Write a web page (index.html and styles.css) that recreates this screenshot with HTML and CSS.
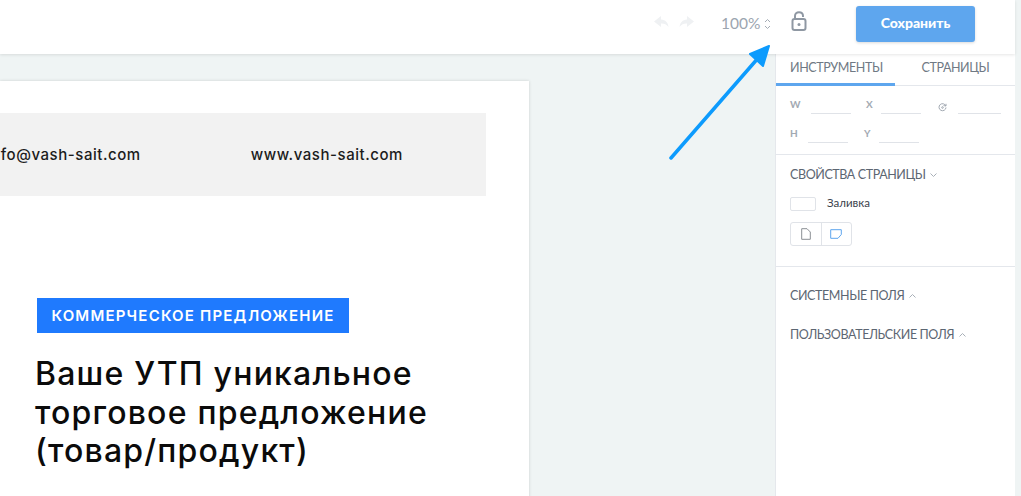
FILE: index.html
```html
<!DOCTYPE html>
<html lang="en">
<head>
    <meta charset="UTF-8">
    <title>Редактор</title>
    <link rel="stylesheet" href="styles.css">
</head>
<body>
    <div class="app">
        <div class="workspace">
            <header class="topbar">
                <svg class="history" width="42" height="14" viewBox="0 0 42 14">
                    <path d="M8 1 L1 6.500 L8 12 V8.500 C11 8.300 13.500 9.300 15.500 12 C15 7.500 12.500 4.800 8 4.500 Z" />
                    <path d="M34 1 L41 6.500 L34 12 V8.500 C31 8.300 28.500 9.300 26.500 12 C27 7.500 29.500 4.800 34 4.500 Z" />
                </svg>
                <span class="zoom-value">100%</span>
                <svg class="zoom-arrows" width="7" height="12" viewBox="0 0 7 12">
                    <path d="M1 4 L3.500 1.500 L6 4 M1 8 L3.500 10.500 L6 8" />
                </svg>
                <svg class="lock" width="16" height="20" viewBox="0 0 16 20">
                    <path class="lock-line" d="M4 8 V5 C4 2.500 5.700 1.200 8 1.200 C10.300 1.200 12 2.500 12 5 V6" />
                    <rect class="lock-line" x="1.500" y="8" width="13" height="11" rx="2" />
                    <circle class="lock-dot" cx="8" cy="13.500" r="1.500" />
                </svg>
                <button class="save-btn">Сохранить</button>
            </header>

            <div class="main">
                <div class="canvas">
                    <div class="page">
                        <div class="contacts">
                            <span>info@vash-sait.com</span>
                            <span>www.vash-sait.com</span>
                        </div>
                        <div class="offer">
                            <div class="offer-badge">КОММЕРЧЕСКОЕ ПРЕДЛОЖЕНИЕ</div>
                            <h1 class="offer-title">Ваше УТП уникальное<br>торговое предложение<br>(товар/продукт)</h1>
                        </div>
                    </div>
                </div>

                <aside class="sidebar">
                    <div class="tabs">
                        <div class="tab tab-active">ИНСТРУМЕНТЫ</div>
                        <div class="tab">СТРАНИЦЫ</div>
                    </div>

                    <div class="fields">
                        <div class="field-row">
                            <span class="field-label label-w">W</span>
                            <span class="field-line"></span>
                            <span class="field-label label-x">X</span>
                            <span class="field-line"></span>
                            <svg class="rotate-icon" width="9" height="9" viewBox="0 0 9 9">
                                <path d="M7.800 3 A3.500 3.500 0 1 0 8 4.500 M5.500 2.600 L8 3 L8 .8" />
                                <circle cx="4.500" cy="4.500" r=".8" />
                            </svg>
                            <span class="field-line line-wide"></span>
                        </div>
                        <div class="field-row">
                            <span class="field-label label-h">H</span>
                            <span class="field-line"></span>
                            <span class="field-label label-y">Y</span>
                            <span class="field-line"></span>
                        </div>
                    </div>

                    <div class="props">
                        <div class="section-title">СВОЙСТВА СТРАНИЦЫ
                            <svg class="chevron" width="7" height="4" viewBox="0 0 7 4"><path d="M.5 .5 L3.500 3.500 L6.500 .5" /></svg>
                        </div>
                        <div class="fill-row">
                            <span class="swatch"></span>
                            <span class="fill-label">Заливка</span>
                        </div>
                        <div class="orient">
                            <span class="orient-btn">
                                <svg width="10" height="12" viewBox="0 0 10 12"><path class="sheet-gray" d="M.7 .7 H6 L9.300 4 V11.300 H.7 Z" /></svg>
                            </span>
                            <span class="orient-btn">
                                <svg width="12" height="10" viewBox="0 0 12 10"><path class="sheet-blue" d="M.7 .7 H11.300 V5.500 L8 9.300 H.7 Z" /></svg>
                            </span>
                        </div>
                    </div>

                    <div class="section-title section-closed">СИСТЕМНЫЕ ПОЛЯ
                        <svg class="chevron" width="7" height="4" viewBox="0 0 7 4"><path d="M.5 3.500 L3.500 .5 L6.500 3.500" /></svg>
                    </div>
                    <div class="section-title section-closed">ПОЛЬЗОВАТЕЛЬСКИЕ ПОЛЯ
                        <svg class="chevron" width="7" height="4" viewBox="0 0 7 4"><path d="M.5 3.500 L3.500 .5 L6.500 3.500" /></svg>
                    </div>
                </aside>
            </div>
        </div>
        <div class="edge"></div>
    </div>

    <!-- annotation arrow over the screenshot -->
    <svg class="arrow" width="110" height="125" viewBox="0 0 110 125">
        <path class="arrow-shaft" d="M2 120 L90 19" />
        <path class="arrow-head" d="M100 8 L81 16 L94 28 Z" />
    </svg>
</body>
</html>
```

FILE: styles.css
```css
body {
    margin: 0;
    width: 1021px;
    height: 496px;
    overflow: hidden;
    position: relative;
    font-family: Lato, "Noto Sans", sans-serif;
    background-color: #eff4f4;
}

.app {
    display: flex;
    height: 496px;
}

.workspace {
    flex: 1;
    display: flex;
    flex-direction: column;
    min-width: 0;
}

.edge {
    width: 6px;
    background-color: #eff4f4;
}

.topbar {
    height: 54px;
    display: flex;
    align-items: center;
    background-color: #ffffff;
    box-shadow: 0 1px 3px rgba(0, 0, 0, 0.1);
    position: relative;
    z-index: 2;
}

.history {
    margin-left: 653px;
    margin-top: -10px;
    fill: #eff1f3;
}

.zoom-value {
    margin-left: 26px;
    margin-top: -9px;
    width: 38px;
    font-size: 15.500px;
    color: #9ca5af;
}

.zoom-arrows {
    margin-left: 5px;
    margin-top: -7px;
    fill: none;
    stroke: #a3abb4;
    stroke-width: 1;
}

.lock {
    margin-left: 20px;
    margin-top: -12px;
}

.lock-line {
    fill: none;
    stroke: #8f98a3;
    stroke-width: 2;
}

.lock-dot {
    fill: #8f98a3;
}

.save-btn {
    margin-left: 49px;
    margin-top: -6px;
    width: 119px;
    height: 36px;
    padding: 0 0 3px;
    border: none;
    border-radius: 3px;
    background-color: #5ea6ee;
    box-shadow: 0 1px 3px rgba(0, 0, 0, 0.15);
    color: #ffffff;
    font-family: Lato, "Noto Sans", sans-serif;
    font-size: 14px;
    font-weight: 900;
}

.main {
    flex: 1;
    display: flex;
    min-height: 0;
}

.canvas {
    flex: 1;
    min-width: 0;
    overflow: hidden;
}

.page {
    width: 529px;
    height: 440px;
    margin-top: 27px;
    padding-top: 32px;
    background-color: #ffffff;
    box-shadow: 0 0 3px rgba(0, 0, 0, 0.15);
}

.contacts {
    width: 486px;
    height: 83px;
    box-sizing: border-box;
    padding-right: 83px;
    display: flex;
    justify-content: flex-end;
    align-items: center;
    gap: 110px;
    background-color: #f2f2f2;
    font-family: Inter, sans-serif;
    font-size: 15px;
    font-weight: 500;
    letter-spacing: 0.550px;
    white-space: nowrap;
    color: #1c1c1c;
}

.contacts span {
    flex-shrink: 0;
}

.offer {
    padding-top: 102px;
    padding-left: 35px;
}

.offer-badge {
    width: 312px;
    height: 35px;
    margin-left: 2px;
    line-height: 35px;
    text-align: center;
    background-color: #1f7afe;
    color: #ffffff;
    font-family: Inter, sans-serif;
    font-size: 15px;
    font-weight: 600;
    letter-spacing: 1.200px;
}

.offer-title {
    margin: 22px 0 0;
    font-family: Inter, sans-serif;
    font-size: 32px;
    font-weight: 500;
    line-height: 38.500px;
    letter-spacing: 1.200px;
    color: #0b0b0b;
}

.sidebar {
    width: 240px;
    flex-shrink: 0;
    background-color: #ffffff;
    border-left: 1px solid #e5e8ec;
    box-sizing: border-box;
    color: #66707c;
}

.tabs {
    display: flex;
    height: 32px;
    border-bottom: 1px solid #e4e7ec;
    box-sizing: border-box;
}

.tab {
    width: 120px;
    box-sizing: border-box;
    padding-top: 6px;
    padding-left: 14px;
    font-size: 12.500px;
    letter-spacing: -0.400px;
    line-height: 16px;
    color: #6f7984;
}

.tab + .tab {
    padding-left: 26px;
}

.tab-active {
    height: 32px;
    border-bottom: 3px solid #5ea6ee;
}

.fields {
    padding: 9px 0 0 14px;
    height: 69px;
    box-sizing: border-box;
    border-bottom: 1px solid #e4e7ec;
}

.field-row {
    display: flex;
    align-items: flex-end;
    height: 19px;
    margin-bottom: 10px;
}

.field-label {
    font-size: 10px;
    font-weight: bold;
    color: #a2a9b2;
    line-height: 12px;
    margin-bottom: 4px;
}

.label-w { width: 21px; }
.label-x { width: 15px; margin-left: 15px; }
.label-h { width: 18px; }
.label-y { width: 15px; margin-left: 16px; }

.field-line {
    width: 40px;
    height: 1px;
    background-color: #e0e3e8;
}

.line-wide {
    width: 43px;
}

.rotate-icon {
    margin: 0 11px 2px 17px;
    fill: none;
    stroke: #a2a9b2;
}

.props {
    height: 112px;
    box-sizing: border-box;
    border-bottom: 1px solid #e4e7ec;
    margin-bottom: 8px;
}

.section-title {
    padding: 12px 0 0 14px;
    font-size: 12.500px;
    letter-spacing: -0.400px;
    line-height: 16px;
    color: #5c6672;
}

.chevron {
    margin-left: 2px;
    vertical-align: 2px;
    fill: none;
    stroke: #a9b0b8;
}

.fill-row {
    display: flex;
    align-items: center;
    margin: 14px 0 0 14px;
}

.swatch {
    width: 24px;
    height: 12px;
    border: 1px solid #e0e3e8;
    border-radius: 2px;
}

.fill-label {
    margin-left: 11px;
    margin-top: -4px;
    font-size: 11.500px;
    color: #3a424c;
}

.orient {
    display: flex;
    width: 62px;
    height: 24px;
    margin: 11px 0 0 14px;
    box-sizing: border-box;
    border: 1px solid #e0e3e8;
    border-radius: 3px;
}

.orient-btn {
    flex: 1;
    display: flex;
    align-items: center;
    justify-content: center;
}

.orient-btn + .orient-btn {
    border-left: 1px solid #e0e3e8;
}

.sheet-gray {
    fill: #ffffff;
    stroke: #8b8f94;
}

.sheet-blue {
    fill: #ffffff;
    stroke: #5ea6ee;
}

.section-closed {
    padding-top: 13px;
    height: 26px;
}

/* sits on top of everything, not part of the layout */
.arrow {
    position: absolute;
    left: 669px;
    top: 38px;
    z-index: 5;
}

.arrow-shaft {
    fill: none;
    stroke: #0d9bfd;
    stroke-width: 3.500;
    stroke-linecap: round;
}

.arrow-head {
    fill: #0d9bfd;
    stroke: #0d9bfd;
    stroke-width: 2;
    stroke-linejoin: round;
}
```
